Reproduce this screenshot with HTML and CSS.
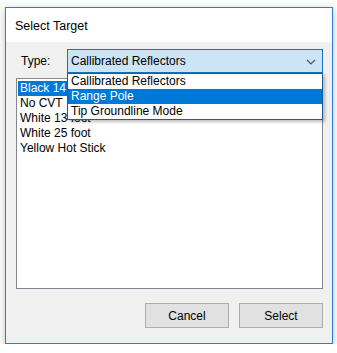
FILE: index.html
```html
<!DOCTYPE html>
<html lang="en">
<head>
  <meta charset="UTF-8" />
  <title>Select Target</title>
  <link rel="stylesheet" href="styles.css">
</head>
<body>
  <div class="window">
    <div class="titlebar">Select Target</div>
    <div class="client">
      <div class="type-row">
        <span class="type-label">Type:</span>
        <div class="combo">
          <span>Callibrated Reflectors</span>
          <svg class="chevron" width="10" height="6" viewBox="0 0 10 6">
            <path d="M1 1 L5 5 L9 1" fill="none" stroke="#555" stroke-width="1.2"/>
          </svg>
          <ul class="dropdown">
            <li>Callibrated Reflectors</li>
            <li class="selected">Range Pole</li>
            <li>Tip Groundline Mode</li>
          </ul>
        </div>
      </div>

      <ul class="listbox">
        <li class="selected">Black 14 foot</li>
        <li>No CVT</li>
        <li>White 13 foot</li>
        <li>White 25 foot</li>
        <li>Yellow Hot Stick</li>
      </ul>

      <div class="buttons">
        <button type="button">Cancel</button>
        <button type="button">Select</button>
      </div>
    </div>
  </div>
</body>
</html>
```

FILE: styles.css
```css
body {
  margin: 0;
  padding: 7px 4px 0 5px;
  background: #fff;
  font-family: "Liberation Sans", Arial, sans-serif;
  font-size: 12px;
  color: #000;
}
.window {
  box-sizing: border-box;
  width: 328px;
  height: 337px;
  border: 1px solid #2b7cd3;
  box-shadow: 0 2px 8px rgba(0,0,0,0.25);
  display: flex;
  flex-direction: column;
}
.titlebar {
  height: 34px;
  background: #fff;
  padding-left: 9px;
  display: flex;
  align-items: center;
  font-size: 12.5px;
  padding-top: 2px;
  box-sizing: border-box;
}
.client {
  flex: 1;
  background: #f0f0f0;
  padding: 7px 9px 15px 10px;
  display: flex;
  flex-direction: column;
}
.type-row {
  display: flex;
  align-items: center;
  height: 24px;
}
.type-label {
  width: 51px;
  padding-left: 5px;
  box-sizing: border-box;
  margin-top: -1px;
}
.combo {
  position: relative;
  flex: 1;
  height: 24px;
  box-sizing: border-box;
  border: 1px solid #1a6fb8;
  background: #cce4f7;
  display: flex;
  align-items: center;
  padding-left: 3px;
}
.chevron {
  position: absolute;
  right: 6px;
  top: 9px;
}
.dropdown {
  position: absolute;
  left: -1px;
  right: -1px;
  top: 23px;
  margin: 0;
  padding: 0;
  list-style: none;
  background: #fff;
  border: 1px solid #1c5d99;
  box-shadow: 2px 2px 3px rgba(0,0,0,0.25);
  z-index: 2;
}
.dropdown li {
  height: 15px;
  line-height: 15px;
  padding-left: 3px;
}
.dropdown li.selected {
  background: #0078d7;
  color: #fff;
}
.listbox {
  box-sizing: border-box;
  height: 211px;
  margin: 5px 0 14px;
  padding: 2px 1px;
  list-style: none;
  background: #fff;
  border: 1px solid #828790;
}
.listbox li {
  height: 15px;
  line-height: 15px;
  padding-left: 2px;
}
.listbox li.selected {
  background: #0078d7;
  color: #fff;
}
.buttons {
  display: flex;
  justify-content: flex-end;
  gap: 10px;
}
button {
  width: 84px;
  height: 25px;
  background: #e1e1e1;
  border: 1px solid #adadad;
  font-family: inherit;
  font-size: 12px;
  color: #000;
  padding: 0;
}
```
